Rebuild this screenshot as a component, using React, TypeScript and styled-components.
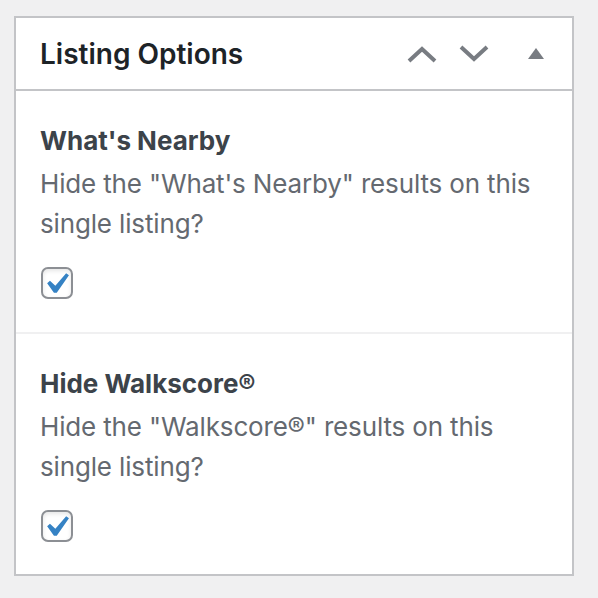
import styled, { createGlobalStyle } from 'styled-components';

const GlobalStyle = createGlobalStyle`
  html, body {
    margin: 0;
    padding: 0;
    background: #f0f0f1;
  }
  body {
    font-family: Inter, 'Noto Sans', 'Liberation Sans', sans-serif;
    -webkit-font-smoothing: antialiased;
  }
`

const Page = styled.div`
  width: 598px;
  height: 598px;
  padding: 16px 0 0 14px;
  box-sizing: border-box;
`

const Postbox = styled.div`
  width: 560px;
  box-sizing: border-box;
  background: #fff;
  border: 2px solid #c3c4c7;
`

const Header = styled.div`
  display: flex;
  align-items: center;
  height: 73px;
  border-bottom: 2px solid #c3c4c7;
  box-sizing: border-box;
`

const Title = styled.h2`
  flex: 1;
  margin: 0;
  padding-left: 24px;
  font-size: 28px;
  font-weight: 600;
  color: #1d2327;
`

const HandleButton = styled.button<{ width: number }>`
  width: ${props => props.width}px;
  height: 71px;
  padding: 0;
  border: 0;
  background: none;
  display: flex;
  align-items: center;
  justify-content: center;
  color: #787c82;
  cursor: pointer;
`

const Section = styled.div`
  padding: 30px 24px 33px 24px;
  border-bottom: 2px solid #f0f0f1;

  &:last-child {
    border-bottom: 0;
    padding-bottom: 32px;
  }
`

const Label = styled.div`
  font-size: 26px;
  line-height: 40px;
  font-weight: 700;
  color: #3c434a;
`

const Description = styled.p`
  margin: 3px 0 0;
  font-size: 26px;
  line-height: 40px;
  letter-spacing: -0.15px;
  color: #646970;
`

const Checkbox = styled.div`
  width: 32px;
  height: 32px;
  margin-top: 23px;
  margin-left: 1px;
  box-sizing: border-box;
  border: 2px solid #8c8f94;
  border-radius: 7px;
  background: #fff;
  box-shadow: inset 0 2px 4px rgba(0, 0, 0, 0.1);

  svg {
    display: block;
    width: 42px;
    height: 42px;
    margin: -6px 0 0 -8px;
  }
`

const options = [
  {
    label: "What's Nearby",
    text: 'Hide the "What\'s Nearby" results on this single listing?',
  },
  {
    label: 'Hide Walkscore®',
    text: 'Hide the "Walkscore®" results on this single listing?',
  },
]

const Check = () => (
  <svg viewBox="0 0 20 20">
    <path d="M14.83 4.89l1.34.94-5.81 8.38H9.02L5.78 9.67l1.34-1.25 2.57 2.4z" fill="#3582c4" />
  </svg>
)

export default function App() {
  return (
    <Page>
      <GlobalStyle />
      <Postbox>
        <Header>
          <Title>Listing Options</Title>
          <HandleButton width={52} aria-label="Move up">
            <svg width="30" height="18" viewBox="0 0 30 18">
              <polyline points="2,16 15,4 28,16" fill="none" stroke="currentColor" strokeWidth="4" />
            </svg>
          </HandleButton>
          <HandleButton width={52} aria-label="Move down">
            <svg width="30" height="18" viewBox="0 0 30 18">
              <polyline points="2,2 15,14 28,2" fill="none" stroke="currentColor" strokeWidth="4" />
            </svg>
          </HandleButton>
          <HandleButton width={72} aria-label="Toggle panel">
            <svg width="16" height="11" viewBox="0 0 16 11">
              <polygon points="8,0 16,11 0,11" fill="currentColor" />
            </svg>
          </HandleButton>
        </Header>
        {options.map(opt => (
          <Section key={opt.label}>
            <Label>{opt.label}</Label>
            <Description>{opt.text}</Description>
            <Checkbox>
              <Check />
            </Checkbox>
          </Section>
        ))}
      </Postbox>
    </Page>
  );
}
